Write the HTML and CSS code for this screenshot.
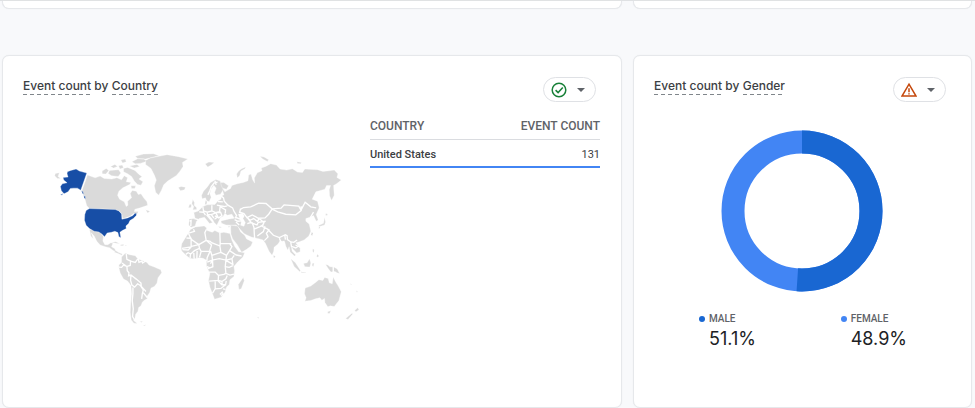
FILE: index.html
```html
<!DOCTYPE html>
<html lang="en">
<head>
<meta charset="utf-8">
<title>Demographics overview</title>
<link rel="stylesheet" href="styles.css">
</head>
<body>
  <div class="row row-previous">
    <div class="card"></div>
    <div class="card"></div>
  </div>

  <div class="row">
    <section class="card">
      <header class="card-header">
        <h2 class="card-title"><button class="picker">Event count</button> by <button class="picker">Country</button></h2>
        <button class="status" aria-label="Data quality">
          <svg class="status-icon ok" viewBox="0 0 16 16"><circle cx="8" cy="8" r="6.8"/><path d="M4.6 8.1l2.5 2.5 4.7-5"/></svg>
          <svg class="caret" viewBox="0 0 8 4"><path d="M0 0h8L4 4z"/></svg>
        </button>
      </header>
      <div class="country-body">
        <svg class="map" viewBox="0 0 930 555" role="img" aria-label="World map">
          <!-- North America -->
          <path d="M112 90L135 98 150 93 162 100 185 102 200 98 214 104 222 92 232 98 228 110 242 112 238 118 218 128 206 138 202 150 208 162 222 170 228 184 233 180 232 168 244 158 240 145 246 136 258 138 264 148 272 146 280 158 290 170 292 180 270 188 254 192 252 199 264 199 262 205 250 205 240 213 228 217 217 221 215 206 207 197 180 193 118 190 110 182 104 160 95 138 102 118Z"/>
          <path d="M118 252L134 256 148 259 155 267 160 274 158 287 164 298 173 298 182 292 188 294 184 304 194 310 198 320 190 316 178 307 165 304 150 299 140 288 132 272 123 262 130 281 122 272Z"/>
          <path d="M156 78L168 70 176 76 167 87 156 86ZM178 76L205 74 212 84 204 94 184 92 174 85ZM181 64L194 58 202 64 190 69ZM205 62L216 60 220 68 209 72ZM220 70L232 67 254 76 266 88 275 94 266 102 278 110 272 120 262 118 252 108 244 94 232 86 220 80ZM238 63L260 58 268 64 252 69ZM245 50L262 41 280 42 292 48 270 55 255 56ZM255 34L280 27 310 26 326 32 302 38 286 42 262 40ZM212 45L225 42 228 50 217 54ZM242 122L256 122 254 130 244 130ZM286 194L299 198 292 203ZM16 85L28 83 24 94 32 100 22 100 14 92Z"/>
          <path d="M286 46L300 39 325 34 350 29 385 35 412 42 396 52 398 64 388 79 378 91 352 108 340 119 333 136 325 150 316 141 312 122 318 105 312 90 302 70 286 58Z"/>
          <path d="M384 127L392 124 405 126 402 134 390 137ZM464 57L475 51 491 52 482 60 472 66Z"/>
          <path d="M183 291L197 289 209 295 198 294ZM211 298L221 297 219 301 211 301ZM225 299L230 300 226 302ZM278 541L286 537 284 541Z"/>

          <!-- South America -->
          <g transform="translate(0 255)">
            <path d="M214 80L225 69 238 73 255 76 263 86 280 92 290 96 296 104 312 110 331 118 334 127 323 142 320 158 312 168 302 173 298 186 290 198 291 205 282 209 276 215 272 226 265 231 263 242 256 251 254 263 250 270 261 279 251 278 243 268 240 245 242 210 244 190 242 165 232 152 220 146 210 128 206 112 206 104 214 96Z"/>
            <path d="M195 60L204 66 216 71 215 75 202 69 193 66ZM268 273L277 272 274 276Z"/>
            <path class="border" d="M228 71L230 87 241 92 240 105 230 108 231 121 236 127 235 136 242 134 258 146 272 158 273 168 287 183M241 92L255 96 262 86M264 84L266 96 275 92 277 98 286 92M206 110L214 111 220 104 230 108M242 134L241 150 245 164 253 170 262 160 270 165 279 178 276 190 274 205M248 171L248 190 246 210 249 235 247 258 254 270M279 187L291 201M215 98L228 107"/>
          </g>

          <!-- Europe and Asia -->
          <path d="M502 112L520 112 534 122 528 132 516 129 523 140 540 130 544 121 560 116 578 112 592 107 594 90 601 87 606 104 612 114 611 99 620 83 634 77 632 69 645 64 660 56 677 60 688 72 708 75 725 71 740 81 755 82 762 72 800 74 816 79 835 77 850 75 861 86 858 97 871 105 858 115 848 121 850 150 842 166 836 152 835 134 839 121 827 121 822 132 795 140 784 162 800 168 805 188 796 208 802 224 796 228 788 211 777 216 765 220 765 228 775 236 780 258 774 272 760 284 744 290 735 292 748 309 748 319 738 323 727 312 722 304 724 318 735 329 731 332 718 320 715 304 711 315 705 302 702 290 688 286 682 296 670 306 669 318 664 330 655 318 644 294 637 284 624 280 604 276 590 270 580 265 564 247 556 239 540 240 526 239 513 234 511 227 536 221 551 219 544 207 530 210 523 204 518 213 510 217 506 225 499 240 491 232 486 222 473 207 467 210 486 232 477 235 462 216 446 220 438 228 434 242 422 246 415 240 416 221 434 220 430 202 444 197 457 184 470 179 493 178 503 166 511 162 513 153 520 149 514 130Z"/>
          <path class="sea" d="M563 207L576 204 581 212 577 220 584 232 580 243 570 240 572 230Z"/>
          <path d="M453 151L459 138 470 126 480 112 496 103 509 108 512 120 518 134 510 147 496 150 492 142 497 129 490 120 482 131 478 146 482 156 476 170 468 166 465 158 455 161ZM465 165L470 170 468 178 463 178ZM427 163L432 172 431 180 438 187 439 193 427 194 430 184 424 176ZM417 178L423 177 422 187 414 188ZM540 240L552 241 562 243 570 260 582 270 588 281 606 290 601 302 588 312 573 321 560 298 546 280 541 266Z"/>
          <path d="M560 98L558 87 564 78 573 71 585 66 583 71 571 78 567 92ZM628 34L640 36 654 44 650 49 636 42ZM738 50L752 52 750 56 740 55ZM825 205L830 206 829 211 824 210ZM821 216L824 230 821 239 806 244 803 241 818 234ZM804 242L808 246 804 251ZM783 260L787 264 784 272 780 268ZM669 329L674 334 671 338 668 335ZM503 244L514 245 508 248ZM532 243L539 243 535 247ZM786 310L790 313 789 322 785 318ZM800 326L804 332 801 336 797 333Z"/>
          <path class="border" d="M472 149L478 137 482 125 491 113 501 111M497 119L493 107M512 153L519 158 521 168 532 180 546 188 550 198 558 211 553 219M502 169L517 170M499 180L510 182 521 184 530 182M484 180L484 197 495 202 507 199 509 182M457 184L459 197 470 201 484 197M446 200L459 201 465 210M470 201L471 208 482 208 496 203 502 215 492 222M499 202L510 201 514 211 505 218 493 212M483 209L490 219M508 184L525 194 524 204M554 216L569 222 573 219M552 223L562 228 573 227M556 230L566 239M570 190L567 201 580 205 589 217 605 209 623 219 643 218 654 207 664 192 681 200 705 207 735 209 751 196 744 183 700 179 691 189 664 191 646 175 624 174 600 185 579 187 568 193M751 194L763 171 780 185 796 188M751 196L751 183M588 215L598 225 609 220 620 228 627 219M590 217L602 233 619 239 623 231 645 228M624 218L640 232 634 243 648 250 657 255M590 235L603 231M604 231L610 247 611 266 612 279M612 251L628 244 639 238M620 272L638 259 643 243M641 286L652 275 647 264 655 254M650 251L668 270 686 277 702 269 704 283M686 279L692 294 701 287M703 268L709 271 710 283 720 290 729 291 739 284M720 291L722 303 735 308 742 303M788 201L779 216M734 299L747 305M417 228L422 226 421 242M432 220L444 223"/>

          <!-- Africa -->
          <g transform="translate(360 225)">
            <path d="M60 28L75 20 101 17 107 22 110 31 125 36 133 31 148 38 160 36 178 40 184 60 192 78 204 94 222 97 217 110 201 125 190 138 192 150 190 168 178 178 176 192 168 200 164 214 152 230 132 236 126 220 118 200 114 180 118 160 112 146 108 136 108 120 98 114 86 112 70 116 58 114 46 104 34 92 32 84 34 70 45 52 54 38Z"/>
            <path d="M218 171L221 181 212 205 205 207 203 192Z"/>
            <path class="border" d="M52 39L72 33 69 27M54 39L62 57 85 73 107 60 103 37 108 27M48 53L62 54 62 80 34 84M62 80L53 89 36 88M85 73L87 84 72 91 61 101 53 97 46 102M87 84L92 93 117 93 123 74 107 60M107 60L119 63 123 67 148 77 151 96 124 105 120 92M148 38L149 69 182 70M149 69L148 78M92 93L87 111M80 92L79 115M70 98L71 116M60 101L59 113M118 94L110 112 109 122M151 96L168 105 177 91 184 79 178 71M177 91L197 104 213 107M124 105L126 119 146 115 166 119 168 105M110 125L126 119 127 139 112 145M126 119L120 130M167 119L184 115 191 105M184 115L187 132 166 120 164 139 176 141 187 136M164 139L166 159 178 164 190 161M115 155L134 155 144 165 143 180 116 182M144 165L160 162 166 159M143 180L154 183 166 175 170 165M134 183L134 205 126 218M134 205L151 204 165 193M143 182L154 193 165 193 167 181M154 183L155 193M109 139L121 143M148 222L155 215 158 221 151 225M63 78L85 73M157 205L165 207"/>
          </g>

          <!-- Oceania -->
          <g transform="translate(600 225)">
            <path d="M163 203L180 197 194 186 204 178 216 180 221 171 232 174 235 187 244 190 247 170 254 184 262 197 271 214 264 240 250 258 238 256 231 259 222 246 221 234 213 239 207 232 194 235 180 240 162 242 166 232 161 220ZM231 273L240 271 236 279 230 278Z"/>
            <path d="M120 115L134 127 149 150 147 154 130 138ZM158 129L169 127 176 115 180 128 177 140 162 139ZM184 129L190 128 188 138 184 137ZM150 154L166 156 164 158 152 157ZM224 132L231 134 237 139 249 140 259 146 266 159 258 157 252 153 240 155 233 146ZM284 294L302 279 306 280 291 297ZM315 266L320 262 324 268 315 274 311 271ZM315 210L320 213 318 216ZM298 189L303 193 300 194ZM348 190L354 187 352 192ZM18 291L25 290 24 294Z"/>
            <path class="border" d="M247 140L247 156"/>
          </g>

          <!-- United States with Alaska -->
          <path class="active" d="M118 190L195 193 206 197 214 206 215 222 232 218 248 211 254 204 259 204 258 211 249 220 239 226 235 235 227 242 228 250 216 256 209 261 212 277 206 274 203 262 194 258 184 261 171 263 163 274 155 266 146 260 132 258 118 250 108 240 103 225 104 208 108 196Z"/>
          <path class="active" d="M52 80L62 76 78 72 88 78 110 84 103 104 92 135 82 129 70 129 61 130 54 140 42 146 34 137 31 124 37 116 51 113 41 105 39 97 54 96 51 86ZM94 136L99 140 101 148 97 145ZM101 151L106 155 106 162 102 158ZM31 149L39 145 36 150Z"/>
        </svg>

        <table class="country-table">
          <thead>
            <tr><th scope="col">COUNTRY</th><th scope="col">EVENT COUNT</th></tr>
          </thead>
          <tbody>
            <tr><td>United States</td><td>131</td></tr>
          </tbody>
        </table>
      </div>
    </section>

    <section class="card">
      <header class="card-header">
        <h2 class="card-title"><button class="picker">Event count</button> by <button class="picker">Gender</button></h2>
        <button class="status" aria-label="Data quality warning">
          <svg class="status-icon warn" viewBox="0 0 16 16"><path d="M8 2.2L15 14H1zM8 6.2v4M8 11.2v1.4"/></svg>
          <svg class="caret" viewBox="0 0 8 4"><path d="M0 0h8L4 4z"/></svg>
        </button>
      </header>
      <svg class="donut" viewBox="0 0 162 162" role="img" aria-label="Male 51.1%, female 48.9%">
        <circle class="female" cx="81" cy="81" r="69"/>
        <circle class="male" cx="81" cy="81" r="69" pathLength="100" stroke-dasharray="51.1 48.9" transform="rotate(-90 81 81)"/>
      </svg>
      <dl class="legend">
        <div class="legend-item male">
          <dt>MALE</dt>
          <dd>51.1%</dd>
        </div>
        <div class="legend-item female">
          <dt>FEMALE</dt>
          <dd>48.9%</dd>
        </div>
      </dl>
    </section>
  </div>
</body>
</html>
```
FILE: styles.css
```css
* {
  box-sizing: border-box;
}

body {
  margin: 0;
  background: #f8f9fb;
  color: #3c4043;
  font-family: Roboto, "Liberation Sans", sans-serif;
}

.row {
  display: grid;
  grid-template-columns: 620fr 339fr;
  gap: 11px;
  padding: 0 3px 0 2px;
}

.row-previous {
  margin-bottom: 46px;
  border-top: 1px solid #dfe1e3;
}

.card {
  background: #fff;
  border: 1px solid #e6e8eb;
  border-radius: 7px;
  box-shadow: 0 0 1px #e6e8eb;
  padding: 21px 21px 55px 20px;
}

.row-previous .card {
  height: 8px;
  padding: 0;
  border-top: 0;
  border-radius: 0 0 7px 7px;
}

.card-header {
  display: flex;
  justify-content: space-between;
  align-items: flex-start;
  padding-right: 4px;
}

.card-title {
  margin: 0;
  font-family: Inter, Roboto, sans-serif;
  font-size: 12px;
  line-height: 18px;
  font-weight: 500;
}

.picker {
  padding: 0;
  border: 0;
  font: inherit;
  color: inherit;
  cursor: pointer;
  background: repeating-linear-gradient(90deg, #80868b 0 4px, transparent 4px 7px) left bottom / 100% 1px no-repeat;
}

.status {
  display: flex;
  align-items: center;
  justify-content: space-between;
  width: 53px;
  height: 25px;
  padding: 0 10px 0 7px;
  background: #fff;
  border: 1px solid #dfe1e5;
  border-radius: 13px;
  cursor: pointer;
}

.status-icon {
  width: 16px;
  height: 16px;
  fill: none;
  stroke-width: 1.5;
}

.ok {
  stroke: #188038;
}

.warn {
  stroke: #c5480c;
}

.caret {
  width: 8px;
  height: 4px;
  fill: #5f6368;
}

.country-body {
  display: grid;
  grid-template-columns: 321fr 230fr;
  gap: 26px;
  align-items: start;
  padding-top: 13px;
}

.map {
  width: 100%;
  padding: 30px 0 0 10px;
  margin-left: 17px;
  fill: #dadada;
}

.map path {
  stroke: #fff;
  stroke-width: 1;
}

.map .border {
  fill: none;
  stroke: #fff;
  stroke-width: 4;
}

.map .sea {
  fill: #fff;
}

.map .active {
  fill: #174ea6;
}

.country-table {
  width: 100%;
  border-collapse: collapse;
  font-size: 12px;
  line-height: 16px;
}

.country-table th {
  padding: 3px 0 5px;
  border-bottom: 1px solid #dadce0;
  color: #5f6368;
  font-weight: 500;
  text-align: left;
}

.country-table td {
  padding: 7px 0 3px;
  border-bottom: 2px solid #4285f4;
  font-size: 11px;
  font-weight: 500;
}

.country-table th:last-child,
.country-table td:last-child {
  text-align: right;
}

.country-table td:last-child {
  font-weight: 400;
}

.donut {
  display: block;
  width: 162px;
  margin: 28px auto 20px;
  fill: none;
  stroke-width: 23;
}

.donut .male {
  stroke: #1967d2;
}

.donut .female {
  stroke: #4285f4;
}

.legend {
  display: flex;
  justify-content: space-between;
  margin: 0;
  padding: 0 43px 0 44px;
}

.legend-item {
  padding-left: 11px;
}

.legend dt {
  display: flex;
  align-items: center;
  color: #5f6368;
  font-size: 10px;
  line-height: 14px;
  font-weight: 500;
}

.legend dt::before {
  content: "";
  width: 6px;
  height: 6px;
  margin: 0 4px 0 -10px;
  border-radius: 50%;
}

.legend .male dt::before {
  background: #1967d2;
}

.legend .female dt::before {
  background: #4285f4;
}

.legend dd {
  margin: 0;
  color: #202124;
  font-family: Inter, Roboto, sans-serif;
  font-size: 18px;
  line-height: 26px;
}
```
